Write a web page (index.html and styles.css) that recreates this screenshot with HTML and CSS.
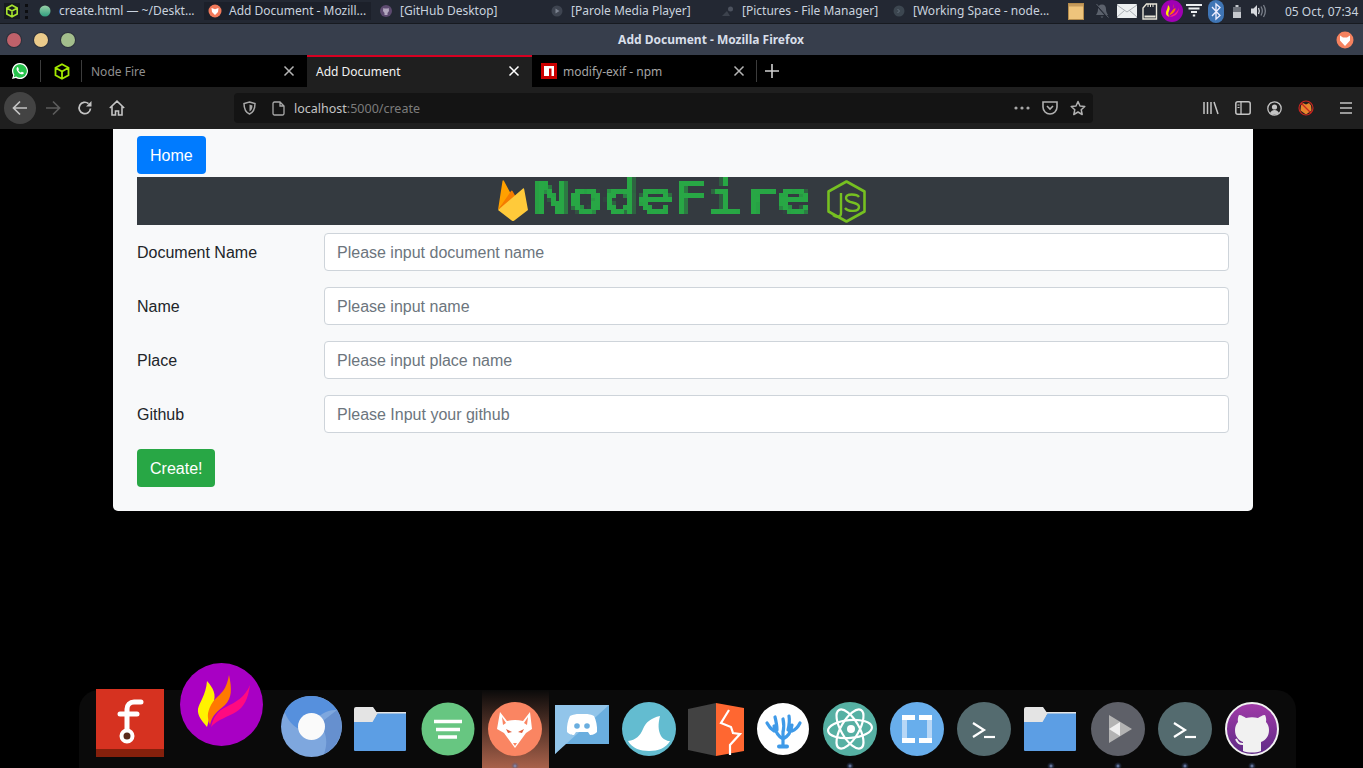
FILE: index.html
```html
<!DOCTYPE html>
<html lang="en">
<head>
<meta charset="utf-8">
<title>Add Document - Mozilla Firefox</title>
<link rel="stylesheet" href="styles.css">
</head>
<body>
<svg class="defs" width="0" height="0" aria-hidden="true"><defs>
  <filter id="pixelate" x="0" y="0" width="1" height="1" color-interpolation-filters="sRGB">
    <feFlood x="2" y="2" width="1" height="1" flood-color="#000"/>
    <feComposite width="4" height="4"/>
    <feTile result="grid"/>
    <feComposite in="SourceGraphic" in2="grid" operator="in"/>
    <feMorphology operator="dilate" radius="2"/>
  </filter>
</defs></svg>
<div class="screen">
  <header class="panel">
    <div class="launcher">
      <svg width="14" height="14" viewBox="0 0 14 14"><path d="M7 1.200 12.200 4v6L7 12.800 1.800 10V4z M1.800 4 7 7l5.200-3M7 7v5.800" fill="none" stroke="#a6e22e" stroke-width="1.600"/></svg>
    </div>
    <div class="grip"><i></i><i></i><i></i></div>
    <div class="tasks">
      <div class="task task-first">
        <svg class="task-ico" width="12" height="12" viewBox="0 0 12 12"><defs><linearGradient id="g1" x1="0" y1="0" x2="0" y2="1"><stop offset="0" stop-color="#9ad2a8"/><stop offset="1" stop-color="#2f9e7f"/></linearGradient></defs><circle cx="6" cy="6" r="5.500" fill="url(#g1)"/></svg>
        <span>create.html — ~/Deskt...</span>
      </div>
      <div class="task task-active">
        <svg class="task-ico" width="14" height="14" viewBox="0 0 14 14"><circle cx="7" cy="7" r="6.500" fill="#f2795a"/><path d="M3.500 4 7 5.200 10.500 4 10 8 7 11 4 8z" fill="#fff"/></svg>
        <span>Add Document - Mozill...</span>
      </div>
      <div class="task">
        <svg class="task-ico" width="12" height="12" viewBox="0 0 12 12"><circle cx="6" cy="6" r="6" fill="#5d4a70"/><path d="M3.300 3 4.500 3.600h3L8.700 3 9 6 7.500 8v2h-3V8L3 6z" fill="#b3a7bf"/></svg>
        <span>[GitHub Desktop]</span>
      </div>
      <div class="task">
        <svg class="task-ico" width="12" height="12" viewBox="0 0 12 12"><circle cx="6" cy="6" r="5.500" fill="#3e4450"/><path d="M4.500 3.500 8.500 6 4.500 8.500z" fill="#7c8390"/></svg>
        <span>[Parole Media Player]</span>
      </div>
      <div class="task">
        <svg class="task-ico" width="12" height="12" viewBox="0 0 12 12"><circle cx="8.500" cy="4" r="2.500" fill="#4c525e"/><path d="M0 11 5 6l3 5z" fill="#3c424d"/></svg>
        <span>[Pictures - File Manager]</span>
      </div>
      <div class="task">
        <svg class="task-ico" width="12" height="12" viewBox="0 0 12 12"><circle cx="6" cy="6" r="5.500" fill="#3c4650"/><path d="M4.500 4 6.500 6 4.500 8" fill="none" stroke="#64707c"/></svg>
        <span>[Working Space - node...</span>
      </div>
    </div>
    <div class="tray">
      <svg class="t-note" width="16" height="17" viewBox="0 0 16 17"><rect x=".5" y=".5" width="15" height="16" fill="#eec47c" stroke="#b58c4c"/><rect x="1" y="1" width="14" height="2.500" fill="#c49a5c"/></svg>
      <svg class="t-bell" width="16" height="16" viewBox="0 0 16 16"><path d="M8 1.500c-2.700 0-4 2-4 4.500 0 3-1 4.500-2 6h12c-1-1.500-2-3-2-6 0-2.500-1.300-4.500-4-4.500zM6.500 13.500h3L8 15z" fill="#5b616c"/><path d="M2 1.500 14 15" stroke="#232833" stroke-width="1.500"/><path d="M2.500 1 14.500 14.500" stroke="#5b616c"/></svg>
      <svg class="t-mail" width="20" height="14" viewBox="0 0 20 14"><rect width="20" height="14" rx="1" fill="#eceff1"/><path d="M0 1 10 8 20 1M0 13 7.500 6.500M20 13 12.500 6.500" fill="none" stroke="#9aa0a6" stroke-width=".8"/></svg>
      <svg class="t-sd" width="16" height="17" viewBox="0 0 16 17"><path d="M4.500 1h10v15H1V5z" fill="#232833" stroke="#e7e4d8" stroke-width="1.400"/><path d="M2.500 13.500h11" stroke="#e7e4d8" stroke-width="2"/><path d="M6 1v3M8.500 1v3M11 1v3" stroke="#e7e4d8"/></svg>
      <svg class="t-flame" width="22" height="22" viewBox="0 0 22 22"><circle cx="11" cy="11" r="11" fill="#a000b4"/><path d="M7 5c2 2 2 4 1 6-1 2-1 4 .500 6-3-1-4-3-3.500-5 .500-2 2-4 2-7z" fill="#ffe900"/><path d="M12 4c1 3 1 5-1 7-2 2-2.500 3.500-2.500 5 1-2 6-3 6-8-.5 0-1.500 1-2 1.500 0-2-.5-4.500-.5-5.500z" fill="#ff7a00"/><path d="M18 7c-.5 4-4 7-9.500 9.500 6 1 9.500-4 9.500-9.500z" fill="#ff1a8c"/></svg>
      <svg class="t-net" width="16" height="14" viewBox="0 0 16 14"><path d="M0 1h16M2.500 4.500h11M5 8h6M6.800 11.500h2.400" stroke="#eceff1" stroke-width="1.800"/></svg>
      <svg class="t-bt" width="16" height="23" viewBox="0 0 16 23"><rect width="16" height="23" rx="8" fill="#3f75b5"/><path d="M4 7 12 15.500 8 19V4l4 3.500L4 16" fill="none" stroke="#eef" stroke-width="1.300"/></svg>
      <svg class="t-bat" width="8" height="13" viewBox="0 0 8 13"><path d="M2.500 0h3v2H8v11H0V2h2.500z" fill="#c6c9ce"/><path d="M0 2h8v5H0z" fill="#6d727b"/></svg>
      <svg class="t-vol" width="15" height="14" viewBox="0 0 15 14"><path d="M0 4.500h2.500L6 1v12L2.500 9.500H0z" fill="#d6d9de"/><path d="M7.500 4c1 1.800 1 4.200 0 6" fill="none" stroke="#d6d9de" stroke-width="1.300"/><path d="M10 2.500c1.600 2.800 1.600 6.200 0 9M12.500 1c2.200 3.600 2.200 8.400 0 12" fill="none" stroke="#7b818b" stroke-width="1.300"/></svg>
      <span class="clock">05 Oct, 07:34</span>
    </div>
  </header>

  <div class="titlebar">
    <div class="lights"><i class="l-red"></i><i class="l-yel"></i><i class="l-grn"></i></div>
    <div class="title">Add Document - Mozilla Firefox</div>
    <svg class="title-fox" width="18" height="18" viewBox="0 0 18 18"><circle cx="9" cy="9" r="8.500" fill="#f5825f"/><path d="M4 4.500 7 6.500h4L14 4.500v5L9 15 4 9.500z" fill="#fff"/></svg>
  </div>

  <div class="tabbar">
    <div class="pin pin-a">
      <svg width="18" height="18" viewBox="0 0 18 18"><path d="M9 1a8 8 0 0 0-6.800 12.200L1 17l3.900-1.100A8 8 0 1 0 9 1z" fill="#fff"/><path d="M9 2.300a6.700 6.700 0 0 0-5.600 10.400l-.7 2.500 2.600-.7A6.700 6.700 0 1 0 9 2.300z" fill="#27c24c"/><path d="M6.300 5.200c-.9.800-1 2.100-.2 3.500.8 1.500 2.300 3 4 3.500 1.200.4 2.300 0 2.700-1 .1-.5 0-.7-.3-.8l-1.500-.7c-.2 0-.4 0-.5.200l-.6.700c-1.100-.4-2-1.300-2.600-2.400l.5-.6c.1-.2.1-.4 0-.6l-.6-1.500c-.2-.4-.6-.5-.9-.3z" fill="#fff"/></svg>
    </div>
    <div class="pin pin-b">
      <svg width="16" height="17" viewBox="0 0 16 17"><path d="M8 1.200 14.500 4.800v7.400L8 15.800 1.500 12.200V4.800z M1.500 4.800 8 8.500l6.500-3.700M8 8.500v7.300" fill="none" stroke="#a3e800" stroke-width="1.800"/></svg>
    </div>
    <div class="tab tab-first">
      <span class="tab-label">Node Fire</span>
      <svg class="tab-x" width="12" height="12" viewBox="0 0 12 12"><path d="M1.500 1.500l9 9M10.500 1.500l-9 9" stroke="#b5b5b5" stroke-width="1.500"/></svg>
    </div>
    <div class="tab tab-active">
      <span class="tab-label">Add Document</span>
      <svg class="tab-x" width="12" height="12" viewBox="0 0 12 12"><path d="M1.500 1.500l9 9M10.500 1.500l-9 9" stroke="#fff" stroke-width="1.500"/></svg>
    </div>
    <div class="tab tab-npm">
      <svg class="npm" width="16" height="16" viewBox="0 0 16 16"><rect width="16" height="16" fill="#cb0000"/><path d="M3 3h10v10h-2.500V5.500H8V13H3z" fill="#fff"/></svg>
      <span class="tab-label">modify-exif - npm</span>
      <svg class="tab-x" width="12" height="12" viewBox="0 0 12 12"><path d="M1.500 1.500l9 9M10.500 1.500l-9 9" stroke="#b5b5b5" stroke-width="1.500"/></svg>
    </div>
    <div class="newtab">
      <svg width="14" height="14" viewBox="0 0 14 14"><path d="M7 0v14M0 7h14" stroke="#d0d0d0" stroke-width="1.600"/></svg>
    </div>
  </div>

  <nav class="navbar">
    <div class="nav-left">
      <div class="nbtn nbtn-back"><svg width="16" height="16" viewBox="0 0 16 16"><path d="M1 8h14M8 1.500 1.500 8 8 14.500" fill="none" stroke="#c4c4c4" stroke-width="1.700"/></svg></div>
      <div class="nbtn"><svg width="16" height="16" viewBox="0 0 16 16"><path d="M1 8h14M8 1.500 14.500 8 8 14.500" fill="none" stroke="#5c5c5c" stroke-width="1.700"/></svg></div>
      <div class="nbtn"><svg width="16" height="16" viewBox="0 0 16 16"><path d="M13.500 8.500A5.700 5.700 0 1 1 11.500 3.600" fill="none" stroke="#c4c4c4" stroke-width="1.700"/><path d="M14.500 1v5.500H9z" fill="#c4c4c4"/></svg></div>
      <div class="nbtn"><svg width="16" height="16" viewBox="0 0 16 16"><path d="M.8 8 8 1.200 15.200 8M3 6.500V15h3.500v-4h3v4H13V6.500" fill="none" stroke="#c4c4c4" stroke-width="1.600"/></svg></div>
    </div>
    <div class="urlbar">
      <svg class="u-shield" width="13" height="14" viewBox="0 0 13 14"><path d="M6.500 1 12 2.500C12 8 10 11.500 6.500 13 3 11.500 1 8 1 2.500z" fill="none" stroke="#a8a8a8" stroke-width="1.500"/><path d="M6.500 3.500 9.500 4.500C9.500 7.500 8.500 9.500 6.500 10.500z" fill="#a8a8a8"/></svg>
      <svg class="u-page" width="13" height="15" viewBox="0 0 13 15"><path d="M1 2.500A1.500 1.500 0 0 1 2.500 1H8l4 4v7.500a1.500 1.500 0 0 1-1.500 1.500h-8A1.500 1.500 0 0 1 1 12.500zM8 1v4h4" fill="none" stroke="#a8a8a8" stroke-width="1.300"/></svg>
      <span class="url"><b>localhost</b>:5000/create</span>
      <svg class="u-dots" width="16" height="4" viewBox="0 0 16 4"><circle cx="2" cy="2" r="1.600" fill="#a8a8a8"/><circle cx="8" cy="2" r="1.600" fill="#a8a8a8"/><circle cx="14" cy="2" r="1.600" fill="#a8a8a8"/></svg>
      <svg class="u-pocket" width="16" height="14" viewBox="0 0 16 14"><path d="M1 1h14v5a7 7 0 0 1-14 0z" fill="none" stroke="#b0b0b0" stroke-width="1.600"/><path d="M5 5l3 3 3-3" fill="none" stroke="#b0b0b0" stroke-width="1.600"/></svg>
      <svg class="u-star" width="16" height="16" viewBox="0 0 16 16"><path d="M8 1.500 10 6l4.800.5-3.600 3.200 1 4.800L8 12l-4.200 2.500 1-4.800L1.200 6.500 6 6z" fill="none" stroke="#b0b0b0" stroke-width="1.500" stroke-linejoin="round"/></svg>
    </div>
    <div class="nav-right">
      <svg class="n-lib" width="16" height="14" viewBox="0 0 16 14"><path d="M1 1v12M4.500 1v12M8 1v12M11 1l4 12" stroke="#c4c4c4" stroke-width="1.500"/></svg>
      <svg class="n-side" width="16" height="14" viewBox="0 0 16 14"><rect x=".8" y=".8" width="14.400" height="12.400" rx="2" fill="none" stroke="#c4c4c4" stroke-width="1.500"/><path d="M6 1v12" stroke="#c4c4c4" stroke-width="1.300"/><path d="M2.500 4h2M2.500 6.500h2" stroke="#c4c4c4"/></svg>
      <svg class="n-acct" width="15" height="15" viewBox="0 0 15 15"><circle cx="7.500" cy="7.500" r="6.700" fill="none" stroke="#c4c4c4" stroke-width="1.300"/><circle cx="7.500" cy="6" r="2.600" fill="#c4c4c4"/><path d="M3 12c1-2 2.500-3 4.500-3s3.500 1 4.500 3c-2.500 2-6.500 2-9 0z" fill="#c4c4c4"/></svg>
      <svg class="n-addon" width="16" height="16" viewBox="0 0 16 16"><path d="M3 5.500 5 3l3 1.500L11 3l2 2.500.5 5L8 14.500 2.500 10.500z" fill="#e8862e"/><circle cx="8" cy="8" r="7" fill="none" stroke="#c9241f" stroke-width="1.200"/><path d="M3 3l10 10" stroke="#c9241f" stroke-width="1.200"/></svg>
      <svg class="n-menu" width="12" height="12" viewBox="0 0 12 12"><path d="M0 1h12M0 6h12M0 11h12" stroke="#c4c4c4" stroke-width="1.500"/></svg>
    </div>
  </nav>

  <main class="page">
    <section class="card">
      <a class="btn btn-blue btn-home">Home</a>
      <div class="banner">
        <svg class="b-fire" width="30" height="42" viewBox="0 0 30 42"><path d="M0 30 4.500 1c.2-1 1-1 1.500 0l7 13z" fill="#ffa000"/><path d="M0 30 13 11c.5-.7 1-.7 1.500 0L19 19z" fill="#f57c00"/><path d="M0 30 25 8.500c.5-.5 1-.3 1.100.3L30 30 16 40.800c-.7.400-1.300.400-2 0z" fill="#ffca3a"/></svg>
        <span class="b-name"><span class="b-text">NodeFire</span></span>
        <svg class="b-node" width="39" height="43" viewBox="0 0 39 43"><path d="M19.500 1.500 37.500 11.500v20L19.500 41.500 1.500 31.500v-20z" fill="none" stroke="#76c021" stroke-width="2.600" stroke-linejoin="round"/><path d="M14 13v20c0 4-4 5-8 2" fill="none" stroke="#76c021" stroke-width="2.400"/><path d="M32 17c-2-3-13-4-13 1 0 6 13 3 13 9 0 5-11 5-14 1" fill="none" stroke="#76c021" stroke-width="2.400"/></svg>
      </div>
      <form class="form">
        <div class="row"><label class="label">Document Name</label><input class="input" placeholder="Please input document name"></div>
        <div class="row"><label class="label">Name</label><input class="input" placeholder="Please input name"></div>
        <div class="row"><label class="label">Place</label><input class="input" placeholder="Please input place name"></div>
        <div class="row"><label class="label">Github</label><input class="input" placeholder="Please Input your github"></div>
        <a class="btn btn-green">Create!</a>
      </form>
    </section>
  </main>

  <footer class="dock">
    <div class="slot s-flare"><svg width="68" height="68" viewBox="0 0 68 68"><rect width="68" height="60" fill="#d63220"/><rect y="60" width="68" height="8" fill="#85200c"/><path d="M45 13h-7c-4 0-7 3-7 7v26" fill="none" stroke="#fff" stroke-width="5" stroke-linecap="round"/><path d="M24 25h17" stroke="#fff" stroke-width="5" stroke-linecap="round"/><circle cx="31" cy="47" r="5.500" fill="#5a2a1a" stroke="#fff" stroke-width="4"/></svg></div>
    <div class="slot s-flame"><svg width="83" height="83" viewBox="0 0 83 83"><circle cx="41.500" cy="41.500" r="41.500" fill="#a800c4"/><path d="M27 18c6 7 10 13 6 23-3 8-3 13-6 23-4-5-10-11-9-18 1-6 8-14 9-28z" fill="#fff200"/><path d="M49 12c3 14 3 23-4 30-7 6-13 10-15 20-3-8-3-12 1-20 3-6 7-8 12-14 3-4 5-10 6-16z" fill="#ff7a00"/><path d="M70 22c-2 14-6 22-14 27-8 5-18 7-25 15 2-9 6-16 15-20 10-5 19-10 24-22z" fill="#ff0a80"/></svg></div>
    <div class="slot s-chrome"><svg width="61" height="61" viewBox="0 0 61 61"><circle cx="30.500" cy="30.500" r="30.500" fill="#7ea7de"/><path d="M56 14A30.500 30.500 0 0 1 43 58C48 44 44 34 38 28z" fill="#6690cf"/><path d="M3.500 16C10 32 22 38 30.500 30.500 36 18 48 13 56 14 50 5 40 0 30.500 0 18 0 8 6 3.500 16z" fill="#5690dd"/><circle cx="30.500" cy="30.500" r="13.500" fill="#fafafa"/></svg></div>
    <div class="slot s-folder"><svg width="52" height="44" viewBox="0 0 52 44"><path d="M0 2a2 2 0 0 1 2-2h17l3.500 5H52v3H23l-4 10H0z" fill="#e4e4e4"/><path d="M0 43a1 1 0 0 0 1 1h50a1 1 0 0 0 1-1V6.500H23.500L18.500 15H0z" fill="#5c9ee4"/></svg></div>
    <div class="slot"><svg width="54" height="54" viewBox="0 0 54 54"><circle cx="27" cy="27" r="26.500" fill="#67c681"/><path d="M13 19.500h28M15 27.500h24M17 35h19" stroke="#fff" stroke-width="3.300"/></svg></div>
    <div class="slot slot-active"><svg class="fox" width="54" height="54" viewBox="0 0 54 54"><circle cx="27" cy="27" r="27" fill="#fa8562"/><path d="M12 10 19 19Q27 17 35 19L42 10 44 27 38 31 30 42 27 46 24 42 16 31 9 27z" fill="#fff"/><path d="M14 15l4 6-3 2zM40 15l-4 6 3 2z" fill="#fa8562"/><path d="M18 27l6 3-4 1zM36 27l-6 3 4 1z" fill="#e05c3a"/><path d="M25 41 27 44 29 41z" fill="#fa8562"/></svg></div>
    <div class="slot"><svg width="54" height="49" viewBox="0 0 54 49"><path d="M0 0h54v39H9L0 49z" fill="#6aaedf"/><path d="M0 0h54L0 49z" fill="#92c5ea"/><path d="M12 27c-.5-6 1-12 3-16 5-2 8-2 8-2h8s4 0 8 2c2 4 3.500 10 3 16-3 3-6 3-7 3l-2-3H21l-2 3c-1 0-4 0-7-3z" fill="#fff"/><circle cx="22" cy="21" r="2.800" fill="#6aaedf"/><circle cx="32" cy="21" r="2.800" fill="#6aaedf"/></svg></div>
    <div class="slot"><svg width="54" height="54" viewBox="0 0 54 54"><circle cx="27" cy="27" r="27" fill="#63bcd0"/><path d="M6 39c8-1 12-5 15-12 3-7 8-11 17-13-2 8-2 14 1 20 1 2 4 4 7 5z" fill="#fff"/><path d="M6 39h42c-4 7-12 10-21 10S10 46 6 39z" fill="#fff"/></svg></div>
    <div class="slot"><svg width="56" height="53" viewBox="0 0 56 53"><path d="M0 6 28 0v53L0 47z" fill="#424242"/><path d="M28 0l28 5v43l-28 5z" fill="#ff6731"/><path d="M41 7 33 20l10 4 2 6 7 1-10 11v10" fill="none" stroke="#fff" stroke-width="2.200"/></svg></div>
    <div class="slot"><svg width="52" height="52" viewBox="0 0 52 52"><circle cx="26" cy="26" r="26" fill="#fff"/><g fill="none" stroke="#3f9ae8" stroke-width="3.200" stroke-linecap="round"><path d="M26 43V28M26 36c-4-2-7-6-9-13M26 36c4-2 8-6 9-14M17 28c-3-2-5-4-7-8M35 28c3-1 6-4 8-8M20 27c0-5-1-9-2-13M31 27c1-4 2-8 1-14M26 30c1-5 1-10 0-14"/><path d="M22 43.500h8" stroke-width="4"/></g></svg></div>
    <div class="slot"><svg width="54" height="54" viewBox="0 0 54 54"><circle cx="27" cy="27" r="27" fill="#56b0a3"/><g fill="none" stroke="#fff" stroke-width="2.200"><ellipse cx="27" cy="27" rx="22" ry="9" transform="rotate(-5 27 27)"/><ellipse cx="27" cy="27" rx="22" ry="9" transform="rotate(60 27 27)"/><ellipse cx="27" cy="27" rx="22" ry="9" transform="rotate(120 27 27)"/></g><circle cx="28" cy="27" r="4" fill="#fff"/></svg></div>
    <div class="slot"><svg width="54" height="54" viewBox="0 0 54 54"><circle cx="27" cy="27" r="27" fill="#68aeec"/><path d="M12 13h12v5H17v18h7v5H12zM42 13H30v5h7v18h-7v5h12z" fill="#b7d7f6"/><path d="M12 13h13v5H12zM29 13h13v5H29zM12 36h13v5H12zM29 36h13v5H29z" fill="#fff"/></svg></div>
    <div class="slot"><svg width="54" height="54" viewBox="0 0 54 54"><circle cx="27" cy="27" r="27" fill="#546b6f"/><path d="M16 21 27 28 16 35" fill="none" stroke="#fff" stroke-width="2.200"/><path d="M27 35h11" stroke="#fff" stroke-width="2.200"/></svg></div>
    <div class="slot s-folder"><svg width="52" height="44" viewBox="0 0 52 44"><path d="M0 2a2 2 0 0 1 2-2h17l3.500 5H52v3H23l-4 10H0z" fill="#e4e4e4"/><path d="M0 43a1 1 0 0 0 1 1h50a1 1 0 0 0 1-1V6.500H23.500L18.500 15H0z" fill="#5c9ee4"/></svg></div>
    <div class="slot"><svg width="54" height="54" viewBox="0 0 54 54"><circle cx="27" cy="27" r="27" fill="#5e6068"/><path d="M18 13 41 27 18 41z" fill="#b3b3b3"/><path d="M18 27 29 20v14z" fill="#eee"/></svg></div>
    <div class="slot"><svg width="54" height="54" viewBox="0 0 54 54"><circle cx="27" cy="27" r="27" fill="#546b6f"/><path d="M16 21 27 28 16 35" fill="none" stroke="#fff" stroke-width="2.200"/><path d="M27 35h11" stroke="#fff" stroke-width="2.200"/></svg></div>
    <div class="slot"><svg width="54" height="54" viewBox="0 0 54 54"><defs><linearGradient id="g2" x1="0" y1="0" x2="0" y2="1"><stop offset="0" stop-color="#a13ba8"/><stop offset="1" stop-color="#5e2a86"/></linearGradient></defs><circle cx="27" cy="27" r="26" fill="url(#g2)" stroke="#f2f2f2" stroke-width="2"/><path d="M18 49V40c-5-2-8-6-8-12 0-3 1-6 3-8-.5-3 0-5 1-7 3 0 5 2 7 3 4-1 8-1 12 0 2-1 4-3 7-3 1 2 1.500 4 1 7 2 2 3 5 3 8 0 6-3 10-8 12v9c-5 2-13 2-18 0z" fill="#f1f1f1"/><path d="M18 42c-4 0-5-1-7-5" fill="none" stroke="#f1f1f1" stroke-width="2"/></svg></div>
  </footer>
</div>
</body>
</html>
```

FILE: styles.css
```css
* { box-sizing: border-box; }
html, body { margin: 0; padding: 0; background: #000; }
.defs { position: absolute; }
.screen {
  position: relative;
  width: 1363px;
  height: 768px;
  overflow: hidden;
  display: flex;
  flex-direction: column;
  font-family: "Noto Sans", sans-serif;
}
svg { display: block; flex: none; }

/* Desktop panel */
.panel {
  height: 24px;
  flex: none;
  display: flex;
  align-items: center;
  background: #232833;
  border-bottom: 1px solid #171a20;
  color: #c9d2de;
  font-size: 12px;
  padding-bottom: 1px;
}
.launcher {
  width: 16px;
  height: 16px;
  margin-left: 4px;
  background: #161b20;
  display: flex;
  align-items: center;
  justify-content: center;
}
.grip {
  width: 13px;
  display: flex;
  flex-direction: column;
  align-items: center;
  gap: 3px;
}
.grip i { width: 3px; height: 3px; background: #0c0d10; display: block; }
.tasks { display: flex; width: 1032px; }
.task {
  width: 167px;
  margin-right: 4px;
  height: 18px;
  display: flex;
  align-items: center;
  padding-left: 5px;
  padding-bottom: 1px;
  white-space: nowrap;
}
.task-ico { margin-right: 8px; }
.task-first { padding-left: 6px; }
.task-active { background: #1c202a; padding-left: 4px; }
.task-active .task-ico { margin-right: 7px; }
.tray { display: flex; align-items: center; height: 23px; }
.t-note { margin-left: 3px; }
.t-bell { margin-left: 10px; }
.t-mail { margin-left: 7px; }
.t-sd { margin-left: 5px; }
.t-flame { margin-left: 3px; }
.t-net { margin-left: 3px; }
.t-bt { margin-left: 6px; }
.t-bat { margin-left: 9px; }
.t-vol { margin-left: 10px; }
.clock { margin-left: 19px; white-space: nowrap; }

/* Title bar */
.titlebar {
  height: 31px;
  flex: none;
  display: flex;
  align-items: center;
  background: #373e4c;
  padding: 0 9px 0 7px;
}
.lights { display: flex; gap: 13px; }
.lights i { width: 14px; height: 14px; border-radius: 50%; display: block; box-shadow: 0 0 0 1px #2b303b; }
.l-red { background: #bf616a; }
.l-yel { background: #ebcb8b; }
.l-grn { background: #a3be8c; }
.title {
  flex: 1;
  text-align: center;
  padding-left: 11px;
  color: #d8dee9;
  font-weight: 700;
  font-size: 12px;
}

/* Tabs */
.tabbar {
  height: 32px;
  flex: none;
  display: flex;
  background: #000;
  color: #b5b5b5;
  font-size: 12px;
}
.pin {
  width: 41px;
  display: flex;
  align-items: center;
  justify-content: center;
  position: relative;
}
.pin-a { padding-right: 1px; }
.pin::after, .newtab::before {
  content: "";
  position: absolute;
  right: 0;
  top: 5px;
  bottom: 5px;
  width: 1px;
  background: #3c3c3c;
}
.tab {
  display: flex;
  align-items: center;
  width: 225px;
  padding-left: 9px;
  padding-right: 12px;
  white-space: nowrap;
}
.tab-label { flex: 1; }
.tab-first { color: #8f8f8f; }
.tab-active {
  background: #1f1f1f;
  color: #f2f2f2;
  border-top: 2px solid #d70022;
  padding-bottom: 2px;
}
.tab-npm { width: 224px; color: #a5a5a5; padding-right: 11px; }
.npm { margin-right: 6px; }
.newtab {
  position: relative;
  width: 32px;
  display: flex;
  align-items: center;
  justify-content: center;
}
.newtab::before { left: 0; right: auto; }

/* Nav bar */
.navbar {
  height: 42px;
  flex: none;
  display: flex;
  align-items: center;
  background: #1f1f1f;
}
.nav-left { display: flex; width: 234px; padding-left: 4px; align-items: center; }
.nbtn {
  width: 32px;
  height: 32px;
  border-radius: 50%;
  display: flex;
  align-items: center;
  justify-content: center;
}
.nbtn-back { background: #434343; margin-right: 1px; }
.urlbar {
  width: 859px;
  height: 30px;
  background: #141414;
  border-radius: 4px;
  display: flex;
  align-items: center;
  padding-left: 9px;
  color: #7c7c7c;
  font-size: 12.500px;
}
.u-shield { margin-right: 16px; }
.u-page { margin-right: 9px; }
.url { flex: 1; }
.url b { font-weight: 400; color: #c4c4c4; }
.u-dots { margin-right: 12px; }
.u-pocket { margin-right: 12px; }
.u-star { margin-right: 7px; }
.nav-right { flex: 1; display: flex; align-items: center; padding-left: 110px; }
.n-lib { margin-right: 16px; }
.n-side { margin-right: 16px; }
.n-acct { margin-right: 16px; }
.n-addon { margin-right: 26px; }

/* Page */
.page {
  flex: 1;
  background: #000;
  padding-left: 113px;
  font-family: "Liberation Sans", Arial, sans-serif;
  font-size: 16px;
  color: #212529;
}
.card {
  width: 1140px;
  background: #f8f9fa;
  border-radius: 0 0 5px 5px;
  padding: 7px 24px 24px;
}
.btn {
  display: inline-block;
  height: 38px;
  line-height: 24px;
  padding: 8px 13px 6px;
  border-radius: 4px;
  color: #fff;
}
.btn-blue { background: #007bff; }
.btn-green { background: #28a745; }
.btn-home { display: block; width: 69px; margin-bottom: 3px; }
.banner {
  height: 48px;
  background: #343a40;
  margin-bottom: 8px;
  display: flex;
  align-items: center;
  justify-content: center;
  padding-right: 2px;
}
.b-name {
  width: 277px;
  height: 48px;
  margin: 0 15px 0 7px;
  display: block;
  filter: url(#pixelate);
}
.b-text {
  display: inline-block;
  margin-left: -1px;
  font-family: "DejaVu Sans Mono", monospace;
  font-weight: 400;
  font-size: 42px;
  line-height: 42px;
  color: #28a745;
  -webkit-text-stroke: 1.200px #28a745;
  white-space: nowrap;
  transform: scaleX(1.37);
  transform-origin: left center;
}
.row { display: flex; align-items: center; margin-bottom: 16px; }
.label { width: 187px; color: #212529; flex: none; padding-top: 2px; }
.input {
  flex: 1;
  height: 38px;
  border: 1px solid #ced4da;
  border-radius: 4px;
  background: #fff;
  padding: 7px 12px 5px;
  font: inherit;
}
.input::placeholder { color: #6c757d; opacity: 1; }

/* Dock */
.dock {
  position: absolute;
  left: 79px;
  top: 690px;
  width: 1217px;
  height: 78px;
  background: #0a0a0a;
  border-radius: 20px 20px 0 0;
  display: flex;
  padding-left: 1px;
}
.slot {
  width: 67px;
  height: 78px;
  flex: none;
  display: flex;
  align-items: center;
  justify-content: center;
  padding-right: 1px;
  position: relative;
}
.s-flare { width: 134px; }
.s-flare svg { transform: translate(-17px, -6px); }
.s-flame svg { transform: translate(-26px, -25px); }
.s-chrome svg { transform: translate(-3px, -3px); }
.s-folder svg { transform: translateX(-1px); }
.slot-active { background: linear-gradient(#0a0a0a, #a8614a); }
.slot-active::after,
.slot:nth-child(11)::after,
.slot:nth-child(n+14)::after {
  content: "";
  position: absolute;
  left: 50%;
  bottom: -2px;
  width: 8px;
  height: 8px;
  margin-left: -5px;
  background: radial-gradient(circle, #8397c4 0, rgba(70, 95, 150, .4) 35%, transparent 70%);
}
```
